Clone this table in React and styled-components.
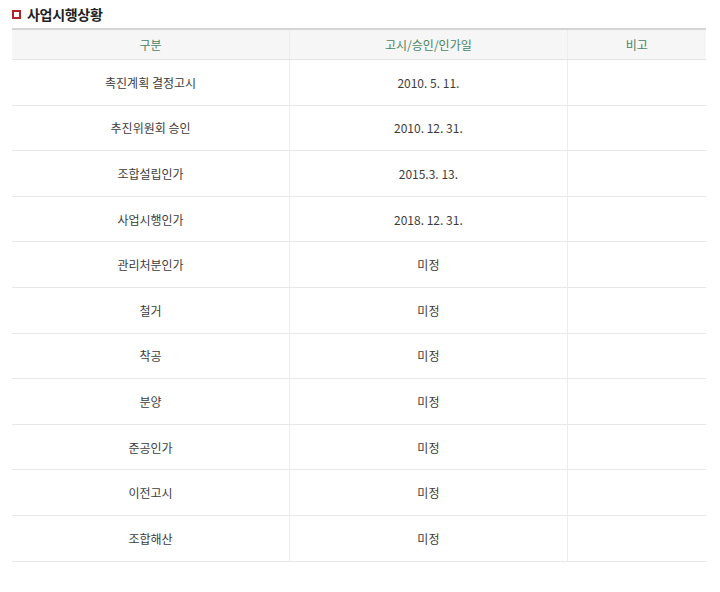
import React from "react";
import styled, { createGlobalStyle } from "styled-components";

const rows = [
    ["촉진계획 결정고시", "2010. 5. 11."],
    ["추진위원회 승인", "2010. 12. 31."],
    ["조합설립인가", "2015.3. 13."],
    ["사업시행인가", "2018. 12. 31."],
    ["관리처분인가", "미정"],
    ["철거", "미정"],
    ["착공", "미정"],
    ["분양", "미정"],
    ["준공인가", "미정"],
    ["이전고시", "미정"],
    ["조합해산", "미정"],
];

const App = () => {
    return (
        <Page>
            <GlobalStyle />
            <Title>
                <Bullet />
                사업시행상황
            </Title>
            <Table>
                <colgroup>
                    <col style={{ width: "40%" }} />
                    <col style={{ width: "40%" }} />
                    <col style={{ width: "20%" }} />
                </colgroup>
                <thead>
                    <tr>
                        <Th>구분</Th>
                        <Th>고시/승인/인가일</Th>
                        <Th>비고</Th>
                    </tr>
                </thead>
                <tbody>
                    {rows.map((row) => (
                        <Row key={row[0]}>
                            <Td>{row[0]}</Td>
                            <Td>{row[1]}</Td>
                            <Td></Td>
                        </Row>
                    ))}
                </tbody>
            </Table>
        </Page>
    );
};

export default App;

// Styled components
const GlobalStyle = createGlobalStyle`
    body {
        margin: 0;
        background: #fff;
        font-family: "Noto Sans CJK KR", "Noto Sans", sans-serif;
    }
`;

const Page = styled.div`
    width: 720px;
    height: 592px;
    padding: 5px 14px 0 12px;
    box-sizing: border-box;
`;

const Title = styled.h3`
    display: flex;
    align-items: center;
    gap: 6px;
    margin: 0;
    height: 18px;
    font-size: 14px;
    font-weight: 700;
    color: #222;
    letter-spacing: -0.3px;
`;

const Bullet = styled.span`
    width: 9px;
    height: 9px;
    box-sizing: border-box;
    border: 2.5px solid #b0262c;
    background: #fff;
    margin-top: 1px;
`;

const Table = styled.table`
    width: 100%;
    margin-top: 5px;
    border-collapse: collapse;
    table-layout: fixed;
    border-top: 2px solid #d4d4d4;
    font-size: 12px;
`;

const Th = styled.th`
    height: 29px;
    padding: 0;
    background: #f6f6f6;
    color: #4a8463;
    font-weight: 400;
    text-align: center;
    border-bottom: 1px solid #e3e3e3;
    border-left: 1px solid #ececec;

    &:first-child {
        border-left: none;
    }
`;

const Row = styled.tr`
    height: 45.6px;
`;

const Td = styled.td`
    padding: 0;
    color: #3c3c3c;
    text-align: center;
    border-bottom: 1.5px solid #e8e8e8;
    border-left: 1px solid #ececec;

    &:first-child {
        border-left: none;
    }
`;
